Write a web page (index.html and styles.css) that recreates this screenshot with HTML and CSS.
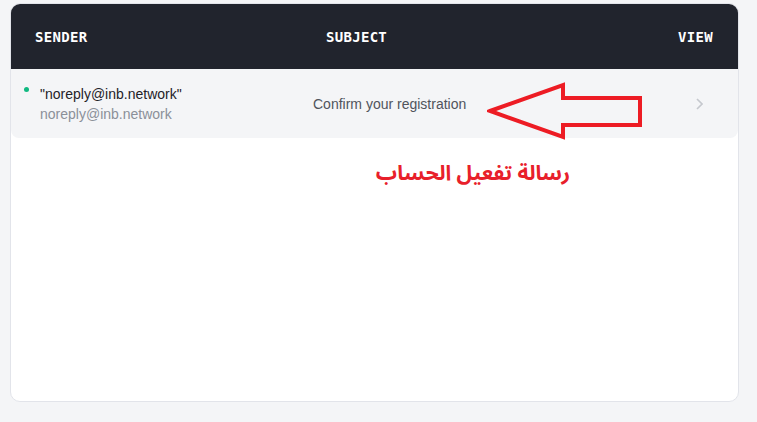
FILE: index.html
```html
<!DOCTYPE html>
<html lang="en">
<head>
    <meta charset="UTF-8">
    <meta name="viewport" content="width=device-width, initial-scale=1.0">
    <title>Inbox</title>
    <link rel="stylesheet" href="styles.css">
</head>
<body>
    <div class="card">
        <div class="table-head">
            <span class="col-sender">SENDER</span>
            <span class="col-subject">SUBJECT</span>
            <span class="col-view">VIEW</span>
        </div>
        <div class="mail-row">
            <div class="sender">
                <span class="unread-dot"></span>
                <div class="sender-text">
                    <div class="sender-name">"noreply@inb.network"</div>
                    <div class="sender-email">noreply@inb.network</div>
                </div>
            </div>
            <div class="subject">Confirm your registration</div>
            <div class="view">
                <svg width="8" height="12" viewBox="0 0 8 12">
                    <path d="M2 1l5 5-5 5" fill="none" stroke="#c5c8ce" stroke-width="1.6"/>
                </svg>
            </div>
            <!-- annotation arrow -->
            <svg class="arrow" width="170" height="62" viewBox="0 0 170 62">
                <path d="M3 31 L76 5 L76 18 L153 18 L153 45 L76 45 L76 57 Z" fill="none" stroke="#ed1c24" stroke-width="4" stroke-linejoin="miter"/>
            </svg>
        </div>
        <div class="note">رسالة تفعيل الحساب</div>
    </div>
</body>
</html>
```

FILE: styles.css
```css
body {
    margin: 0;
    padding: 3px 0 0 10px;
    background-color: #f4f5f7;
    font-family: "Liberation Sans", Arial, sans-serif;
}

.card {
    width: 727px;
    height: 397px;
    background-color: #fff;
    border: 1px solid #e2e4ea;
    border-radius: 10px;
    overflow: hidden;
}

.table-head {
    display: flex;
    align-items: center;
    height: 65px;
    padding: 0 25px 0 24px;
    background-color: #21242d;
    color: #fff;
    font-family: "DejaVu Sans Mono", "Liberation Mono", monospace;
    font-weight: bold;
    font-size: 14px;
    letter-spacing: 0.3px;
}

.col-sender {
    width: 291px;
}

.col-subject {
    flex: 1;
}

.mail-row {
    position: relative;
    display: flex;
    align-items: center;
    height: 69px;
    padding: 0 35px 0 13px;
    background-color: #f4f5f7;
    border-radius: 0 0 8px 8px;
    font-size: 14px;
}

.sender {
    display: flex;
    align-items: flex-start;
    width: 289px;
}

.unread-dot {
    width: 5px;
    height: 5px;
    margin: 3px 11px 0 0;
    border-radius: 50%;
    background-color: #10b981;
}

.sender-text {
    line-height: 20px;
}

.sender-name {
    color: #1f2228;
}

.sender-email {
    color: #8b9099;
}

.subject {
    flex: 1;
    color: #50545c;
}

.view {
    display: flex;
}

.arrow {
    position: absolute;
    left: 476px;
    top: 11px;
}

.note {
    padding: 13px 168px 0 0;
    direction: rtl;
    text-align: right;
    color: #e8202a;
    font-family: "Noto Sans Arabic", "Noto Naskh Arabic", "DejaVu Sans", sans-serif;
    font-weight: bold;
    font-size: 21px;
}
```
